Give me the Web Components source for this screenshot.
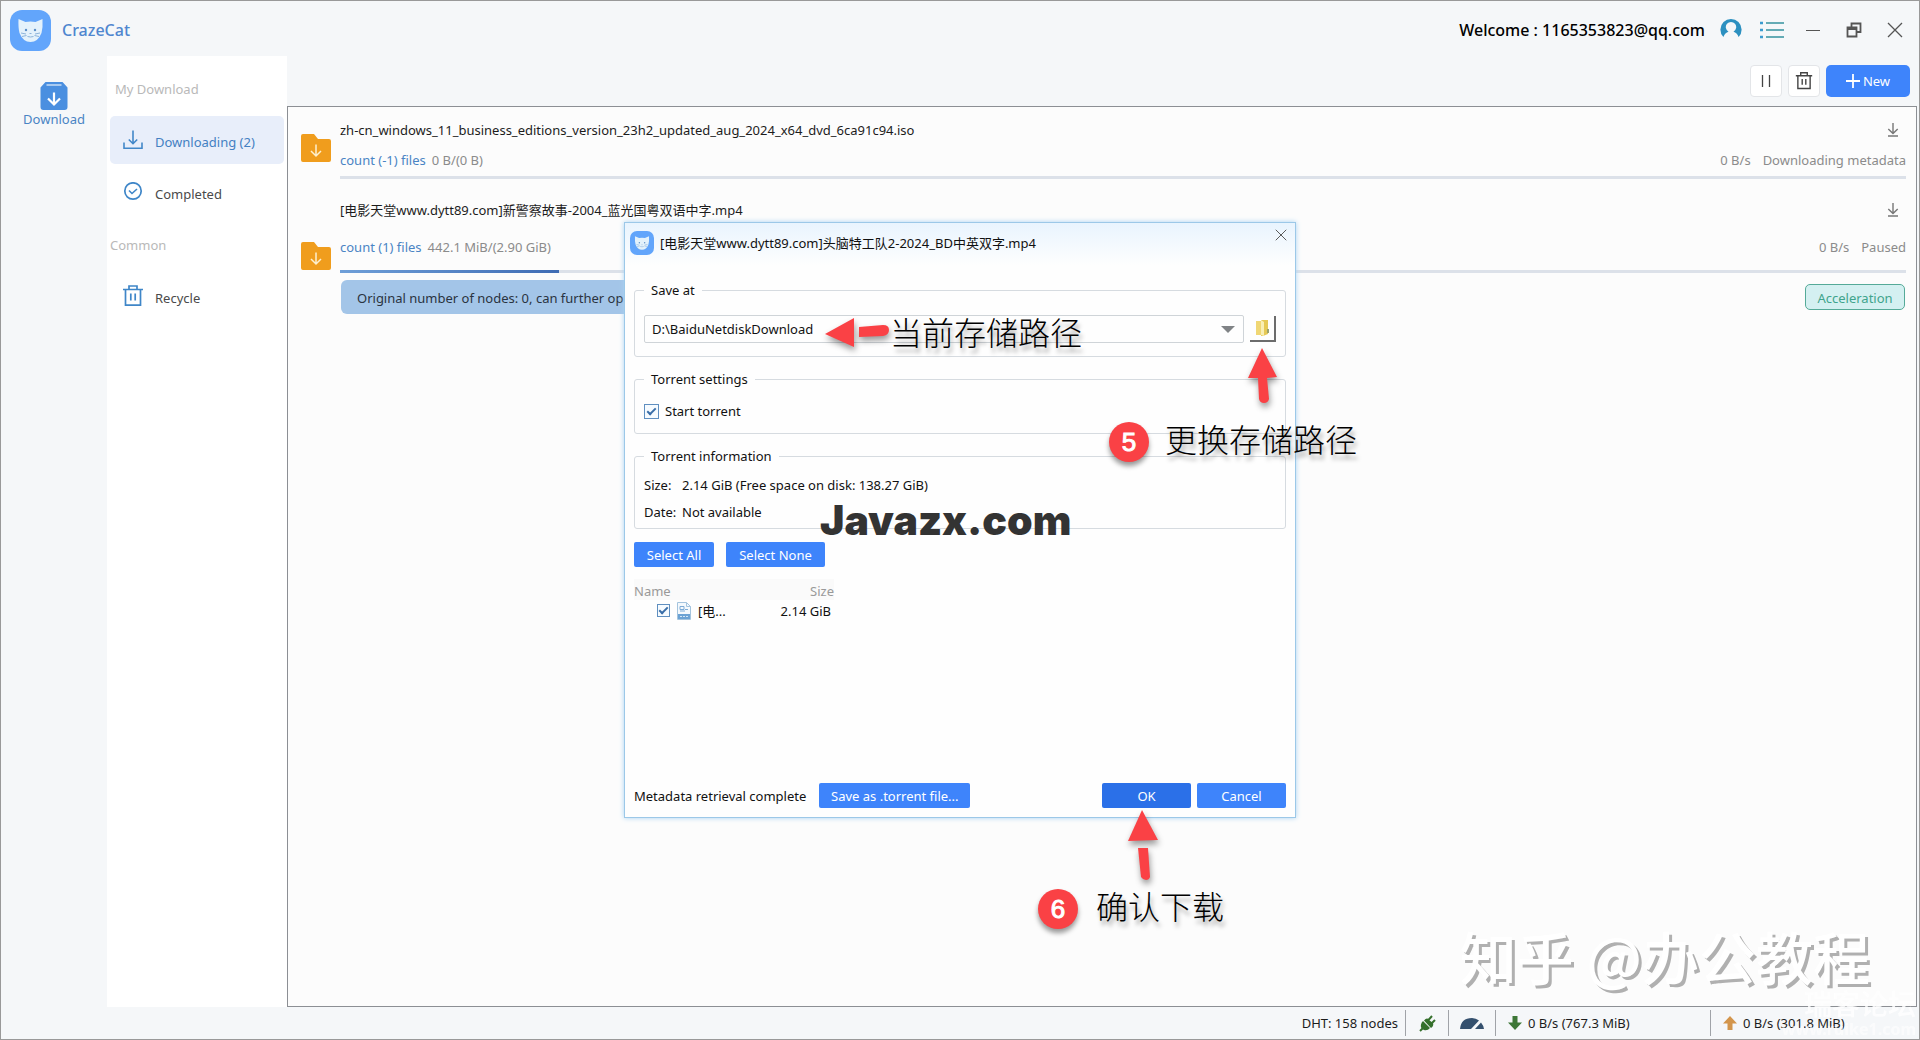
<!DOCTYPE html>
<html lang="en">
<head>
<meta charset="utf-8">
<title>CrazeCat</title>
<style>
  html, body { margin: 0; }
  body { font: 13px/18px "Noto Sans", "Noto Sans CJK SC", sans-serif; color: #1c1c1c; background: #f5f7f9; }
</style>
</head>
<body>
<craze-app></craze-app>

<script>
const base = `<style>
  :host, *, *::before, *::after { box-sizing: border-box; }
  :host { display: block; }
  :host([hidden]) { display: none; }
  svg { display: block; flex: none; }
  button { font: inherit; color: inherit; margin: 0; padding: 0; border: 0; background: none; cursor: pointer; }
</style>`;

function define(name, html) {
  const t = document.createElement('template');
  t.innerHTML = base + html;
  customElements.define(name, class extends HTMLElement {
    constructor() {
      super();
      this.attachShadow({ mode: 'open' }).append(t.content.cloneNode(true));
    }
  });
}

/* ---------- icons ---------- */
const icons = {
  cat: ['0 0 41 41', `<rect width="41" height="41" rx="12" fill="#62a5fb"/><path d="M8.500 9 15.500 12q5-1 10 0l7-3q.5 8-1 14Q28 32 20.500 32T9.500 23Q8.100 17.500 8.500 9z" fill="#e4f2fb"/><circle cx="16" cy="20" r="1.200" fill="#5b8fc7"/><circle cx="25" cy="20" r="1.200" fill="#5b8fc7"/><path d="M19.500 23.500h2M11 23l5 1M12 26.500l4.500-1M30 23l-5 1M29 26.500l-4.500-1M17.500 26.500q3 1 6 0" stroke="#8db4da" fill="none"/>`],
  box: ['0 0 28 28', `<path d="M5.500 0h17L27.500 5.500V25a3 3 0 0 1-3 3h-21a3 3 0 0 1-3-3V5.500z" fill="#4a8fe0"/><path d="M6.500 3h15" stroke="#e8f2fc" stroke-width="1.200"/><path d="M14 10.500v11M8 16.500l6 6 6-6" stroke="#fff" stroke-width="2.200" fill="none"/>`],
  tray: ['0 0 20 20', `<path d="M1 12.500V18.200h18v-5.700M10 .5v13M5.800 9.500l4.200 4.200 4.200-4.200" stroke="#4187c9" stroke-width="1.600" fill="none"/>`],
  done: ['0 0 20 20', `<circle cx="10" cy="9" r="8.200" stroke="#3f86c8" stroke-width="1.700" fill="none"/><path d="M6 8.500 9 11.500l5-4.500" stroke="#3f86c8" stroke-width="1.600" fill="none"/>`],
  bin: ['0 0 20 22', `<path d="M0 4.500h20M2.500 4.500v15.700h15V4.500M6 4V1h8v3M7.800 8.500v7M12.200 8.500v7" stroke="currentColor" stroke-width="1.700" fill="none"/>`],
  folder: ['0 0 30 30', `<path d="M2 1h11l4 5h11a2 2 0 0 1 2 2v19a2 2 0 0 1-2 2H2a2 2 0 0 1-2-2V3a2 2 0 0 1 2-2z" fill="#f09d1d"/><path d="M15 11.500v11M10 18l5 5 5-5" stroke="#fdf0cf" stroke-width="1.500" fill="none"/>`],
  user: ['0 0 22 22', `<path d="M3.400 18A10.600 10.600 0 1 1 18.600 18Q17 13.700 13.500 12.700a5.200 5.200 0 1 0-5 0Q5 13.700 3.400 18z" fill="#2c90c0"/>`],
  list: ['0 0 24 18', `<path d="M6 2h18M6 9h18M6 16h18" stroke="#35939f" stroke-width="1.600"/><path d="M0 2h3M0 9h3M0 16h3" stroke="#3a9bd0" stroke-width="2.400"/>`],
  min: ['0 0 14 16', `<path d="M0 8.500h14" stroke="#555"/>`],
  restore: ['0 0 16 16', `<path d="M5.500 5V1.500h9V10H11" stroke="#555" stroke-width="1.800" fill="none"/><path d="M1.500 5.500h9v9h-9zM1 7h10" stroke="#555" stroke-width="1.800" fill="none"/>`],
  close: ['0 0 16 16', `<path d="M1 1l14 14M15 1 1 15" stroke="#555" stroke-width="1.300"/>`],
  pause: ['0 0 10 12', `<path d="M1.500 0v12M8.500 0v12" stroke="#444" stroke-width="1.300"/>`],
  plus: ['0 0 14 14', `<path d="M7 0v14M0 7h14" stroke="#fff" stroke-width="1.800"/>`],
  down: ['0 0 12 14', `<path d="M6 0v10M1.300 6 6 10.600 10.700 6M1 13h10" stroke="#777" stroke-width="1.400" fill="none"/>`],
  book: ['0 0 16 18', `<path d="M2 2h5v14H2z" fill="#f0d774"/><path d="M7 1h7v14l-5 2H7z" fill="#e6c955"/><path d="M7 1l3 2v14l-3-1z" fill="#f9efb4"/><path d="M13 10h2v4h-2z" fill="#9aa26c"/>`],
  media: ['0 0 14 18', `<path d="M.5.500h9l4 4v13H.5z" fill="#f4f9fd" stroke="#a4c4de"/><path d="M9.500.5v4h4" fill="none" stroke="#a4c4de"/><path d="M3 4.500h4v3H3zM3 9h5M8 7.500h3" stroke="#7dabd6" fill="none"/><path d="M1 12h12v5H1z" fill="#6ba2d4"/><path d="M3 14.500h8" stroke="#d3e6f5" stroke-dasharray="2 1"/>`],
  plug: ['0 0 17 17', `<path d="M1 16l3-3" stroke="#35702c" stroke-width="2"/><path d="M4 6l7 7q-2.500 3-6 2-4-2-3-5.500Q2.500 7 4 6zM5 5.500Q8 2 10 5l4 3q1 3-2 5z" fill="#35702c"/><path d="M9 5.500 13 1M12 9l4-4" stroke="#35702c" stroke-width="2"/>`],
  gauge: ['0 0 24 13', `<path d="M0 12Q1 1 12 1q4 0 7 2.500L11 12zM21 5.500q2.500 3 3 6.500h-9z" fill="#34506e"/>`],
  dn: ['0 0 14 14', `<path d="M4.500 0h5v6.500H14L7 14 0 6.500h4.500z" fill="#3d7737"/>`],
  up: ['0 0 14 14', `<path d="M4.500 14h5V7.500H14L7 0 0 7.500h4.500z" fill="#d3954c"/>`],
};
customElements.define('cc-icon', class extends HTMLElement {
  connectedCallback() {
    if (this.shadowRoot) return;
    const [box, body] = icons[this.getAttribute('name')];
    const [, , w, h] = box.split(' ');
    const size = this.getAttribute('size');
    this.attachShadow({ mode: 'open' }).innerHTML =
      `<style>:host{display:inline-block;flex:none}svg{display:block}</style>
       <svg viewBox="${box}" width="${size || w}" height="${size || h}" aria-hidden="true">${body}</svg>`;
  }
});

/* ---------- header ---------- */
define('title-bar', `<style>
  :host { display: flex; align-items: center; height: 55px; padding: 2px 4px 0 9px; }
  h1 { margin: 0 auto 0 11px; font: 500 16px/24px "Noto Sans", sans-serif; color: #4f86cf; }
  .who { font-size: 16px; line-height: 22px; font-weight: 500; color: #000; margin-right: 5px; }
  button { width: 41px; height: 40px; display: grid; place-items: center; }
  cc-icon[name=cat] { margin-top: 2px; }
</style>
<cc-icon name="cat"></cc-icon><h1>CrazeCat</h1>
<span class="who">Welcome : 1165353823@qq.com</span>
<button aria-label="Account"><cc-icon name="user"></cc-icon></button>
<button aria-label="Menu"><cc-icon name="list"></cc-icon></button>
<button aria-label="Minimize"><cc-icon name="min"></cc-icon></button>
<button aria-label="Restore"><cc-icon name="restore"></cc-icon></button>
<button aria-label="Close"><cc-icon name="close"></cc-icon></button>`);

define('side-rail', `<style>
  :host { width: 106px; flex: none; padding-top: 26px; }
  a { display: flex; flex-direction: column; align-items: center; color: #4a84c4; text-decoration: none; }
</style>
<a href="#download"><cc-icon name="box"></cc-icon>Download</a>`);

define('nav-item', `<style>
  a { display: flex; align-items: center; gap: 12px; height: 48px; padding-left: 13px; border-radius: 5px; color: #4a4a4a; text-decoration: none; }
  :host([active]) a { background: #e8eefa; color: #4480c2; }
  span { padding-top: 4px; }
</style>
<a href="#list"><slot name="icon"></slot><span><slot></slot></span></a>`);

define('side-nav', `<style>
  :host { width: 180px; flex: none; background: #fff; padding: 24px 3px 0; }
  h2 { margin: 0; font: inherit; color: #b9b9b9; }
  .my { padding: 0 5px; margin-bottom: 18px; }
  .common { margin: 20px 0 18px; }
  nav { display: flex; flex-direction: column; gap: 4px; }
  cc-icon { color: #3f86c8; }
</style>
<h2 class="my">My Download</h2>
<nav>
  <nav-item active><cc-icon slot="icon" name="tray"></cc-icon>Downloading (2)</nav-item>
  <nav-item><cc-icon slot="icon" name="done"></cc-icon>Completed</nav-item>
</nav>
<h2 class="common">Common</h2>
<nav><nav-item><cc-icon slot="icon" name="bin"></cc-icon>Recycle</nav-item></nav>`);

/* ---------- content ---------- */
define('tool-bar', `<style>
  :host { display: flex; justify-content: flex-end; align-items: center; gap: 6px; height: 50px; padding-right: 7px; }
  button { height: 32px; width: 32px; display: flex; align-items: center; justify-content: center; background: #fff; border: 1px solid #e3e5e8; border-radius: 4px; color: #444; }
  .new { width: 84px; gap: 3px; background: #3e84fb; border: 0; border-radius: 5px; color: #fff; }
</style>
<button aria-label="Pause"><cc-icon name="pause"></cc-icon></button>
<button aria-label="Delete"><cc-icon name="bin" size="18"></cc-icon></button>
<button class="new"><cc-icon name="plus"></cc-icon>New</button>`);

define('download-row', `<style>
  :host { display: flex; align-items: center; gap: 9px; --gap: 12px; --bar-gap: 7px; --value: 0%; }
  cc-icon[name=folder] { margin-bottom: 4px; }
  .body { flex: 1; min-width: 0; }
  .line { display: flex; align-items: center; justify-content: space-between; }
  .line cc-icon { margin-right: 7px; }
  .meta { margin-top: var(--gap); color: #8b8b8b; }
  .meta ::slotted([slot=count]) { color: #4a84c4; margin-right: 6px; }
  .meta ::slotted([slot=speed]) { margin-right: 12px; }
  .bar { height: 3px; margin-top: var(--bar-gap); background: #dce1e9; }
  .bar i { display: block; height: 3px; width: var(--value); background: linear-gradient(90deg, #6f9fd8, #3f6cb4); }
</style>
<cc-icon name="folder"></cc-icon>
<div class="body">
  <div class="line"><slot name="title"></slot><cc-icon name="down"></cc-icon></div>
  <div class="line meta">
    <div><slot name="count"></slot><slot name="size"></slot></div>
    <div><slot name="speed"></slot><slot name="state"></slot></div>
  </div>
  <div class="bar"><i></i></div>
  <slot name="extra"></slot>
</div>`);

define('download-list', `<style>
  :host { flex: 1; border: 1px solid #8c8f94; background: #fcfcfc; padding: 14px 10px 0 13px; }
  download-row + download-row { margin-top: 22px; --gap: 19px; --bar-gap: 14px; --value: 219px; }
  .extra { display: flex; justify-content: space-between; align-items: center; margin: 7px 1px 0; }
  .note { width: 440px; padding: 9px 16px 7px; background: #a3c5e8; border-radius: 6px; color: #2a3340; }
  .acc { height: 26px; width: 100px; border: 1px solid #55aa98; border-radius: 5px; background: #d4f0f1; color: #3fa48c; padding-top: 2px; }
</style>
<download-row>
  <span slot="title">zh-cn_windows_11_business_editions_version_23h2_updated_aug_2024_x64_dvd_6ca91c94.iso</span>
  <span slot="count">count (-1) files</span><span slot="size">0 B/(0 B)</span>
  <span slot="speed">0 B/s</span><span slot="state">Downloading metadata</span>
</download-row>
<download-row>
  <span slot="title">[电影天堂www.dytt89.com]新警察故事-2004_蓝光国粤双语中字.mp4</span>
  <span slot="count">count (1) files</span><span slot="size">442.1 MiB/(2.90 GiB)</span>
  <span slot="speed">0 B/s</span><span slot="state">Paused</span>
  <div slot="extra" class="extra">
    <div class="note">Original number of nodes: 0, can further op</div>
    <button class="acc">Acceleration</button>
  </div>
</download-row>`);

define('status-bar', `<style>
  :host { display: flex; justify-content: flex-end; align-items: center; height: 32px; color: #1c1c1c; }
  div { display: flex; align-items: center; height: 26px; gap: 6px; }
  div + div { border-left: 1px solid #a0a3a8; }
  .dht { padding-right: 7px; } .plug { width: 43px; justify-content: center; }
  .gauge { width: 47px; justify-content: center; }
  .rate { width: 215px; padding-left: 12px; } .rate:last-child { width: 209px; }
</style>
<div class="dht">DHT: 158 nodes</div>
<div class="plug"><cc-icon name="plug"></cc-icon></div>
<div class="gauge"><cc-icon name="gauge"></cc-icon></div>
<div class="rate"><cc-icon name="dn"></cc-icon>0 B/s (767.3 MiB)</div>
<div class="rate"><cc-icon name="up"></cc-icon>0 B/s (301.8 MiB)</div>`);

/* ---------- dialog ---------- */
define('group-box', `<style>
  fieldset { margin: 0; min-width: 0; border: 1px solid #d6dbe0; border-radius: 3px; padding: var(--pad, 14px) 9px var(--pad-end, 13px); }
  legend { padding: 0 7px; }
</style>
<fieldset><legend><slot name="legend"></slot></legend><slot></slot></fieldset>`);

define('push-button', `<style>
  :host { display: inline-block; }
  button { display: block; width: 100%; height: 25px; padding: 1px 0 0; background: #3e84fb; color: #fff; border-radius: 2px; white-space: nowrap; }
  :host([primary]) button { background: #2b70e8; }
</style><button type="button"><slot></slot></button>`);

define('torrent-dialog', `<style>
  :host { display: flex; flex-direction: column; position: relative; width: 672px; min-height: 596px; background: #fefefe; border: 1px solid #9cc8e8; box-shadow: 0 0 5px #a9d3f3; color: #111; padding: 0 9px 9px; }
  header { display: flex; align-items: center; gap: 6px; height: 42px; margin: 0 -9px 16px; padding: 0 8px 2px 5px; background: linear-gradient(#e9f4fe, #fefefe); }
  header span { flex: 1; }
  header button { align-self: flex-start; padding: 6px 0 0; }
  header button cc-icon { display: block; }
  group-box { margin-bottom: 13px; }
  .path { display: flex; gap: 6px; align-items: center; }
  .combo { flex: 1; position: relative; }
  select { display: block; width: 100%; height: 28px; padding: 0 7px; border: 1px solid #cfd4d8; border-radius: 2px; background: #fefefe; font: inherit; color: #111; appearance: none; }
  .combo::after { content: ""; position: absolute; right: 9px; top: 11px; border: 7px solid transparent; border-top-color: #808386; border-bottom: 0; }
  .browse { width: 26px; height: 26px; display: grid; place-items: center; border-right: 2px solid #6c6c6c; border-bottom: 2px solid #6c6c6c; }
  label { display: flex; align-items: center; gap: 6px; }
  input { appearance: none; margin: 0; width: 15px; height: 15px; border: 1px solid #5f8fc0; background: #f6fbff; flex: none; display: grid; place-items: center; }
  input:checked::before { content: ""; width: 9px; height: 5px; border: solid #3a6ea8; border-width: 0 0 2px 2px; transform: translateY(-1px) rotate(-45deg); }
  td input { width: 13px; height: 13px; }
  dl { display: grid; grid-template-columns: 38px 1fr; row-gap: 9px; margin: 0; }
  dd { margin: 0; }
  .pick { display: flex; gap: 12px; margin-bottom: 12px; }
  .all { width: 80px; } .none { width: 99px; }
  .files { flex: 1; }
  table { width: 200px; border-collapse: collapse; table-layout: fixed; }
  th { font-weight: 400; text-align: left; color: #999; background: #fafafa; height: 21px; padding: 2px 0 0; }
  td { height: 21px; padding: 0; }
  th:last-child { text-align: right; } td:last-child { text-align: right; padding-right: 3px; }
  .name { display: flex; align-items: center; gap: 7px; padding-left: 23px; }
  footer { display: flex; align-items: center; gap: 6px; }
  .save { width: 151px; margin: 0 auto 0 7px; }
  .end { width: 89px; }
</style>
<header><cc-icon name="cat" size="24"></cc-icon><span>[电影天堂www.dytt89.com]头脑特工队2-2024_BD中英双字.mp4</span>
  <button aria-label="Close dialog"><cc-icon name="close" size="12"></cc-icon></button></header>
<group-box style="--pad:16px"><span slot="legend">Save at</span>
  <div class="path"><div class="combo"><select aria-label="Save at"><option>D:\\BaiduNetdiskDownload</option></select></div>
  <button class="browse" aria-label="Browse"><cc-icon name="book"></cc-icon></button></div></group-box>
<group-box><span slot="legend">Torrent settings</span>
  <label><input type="checkbox" checked>Start torrent</label></group-box>
<group-box style="--pad:11px;--pad-end:7px"><span slot="legend">Torrent information</span>
  <dl><dt>Size:</dt><dd>2.14 GiB (Free space on disk: 138.27 GiB)</dd><dt>Date:</dt><dd>Not available</dd></dl></group-box>
<div class="pick"><push-button class="all">Select All</push-button><push-button class="none">Select None</push-button></div>
<div class="files"><table><thead><tr><th>Name</th><th>Size</th></tr></thead>
  <tbody><tr><td><div class="name"><input type="checkbox" checked aria-label="[电..."><cc-icon name="media"></cc-icon><span>[电...</span></div></td><td>2.14 GiB</td></tr></tbody></table></div>
<footer><span>Metadata retrieval complete</span><push-button class="save">Save as .torrent file...</push-button>
  <push-button class="end" primary>OK</push-button><push-button class="end">Cancel</push-button></footer>`);

/* ---------- annotations drawn over the dialog ---------- */
define('guide-notes', `<style>
  :host { position: absolute; inset: 0; pointer-events: none; color: #000; }
  svg { position: absolute; inset: 0; overflow: visible; filter: drop-shadow(1px 4px 3px rgba(0,0,0,.4)); }
  span { position: absolute; white-space: nowrap; font: 300 32px/40px "Noto Sans CJK SC", sans-serif; text-shadow: 2px 5px 4px rgba(0,0,0,.35); }
  b { position: absolute; width: 40px; height: 40px; border-radius: 50%; background: #fa4145; color: #fff; font: 26px/40px "Liberation Sans", sans-serif; text-align: center; box-shadow: 0 4px 5px rgba(0,0,0,.4); -webkit-text-stroke: 1px #fff; }
  .mark { left: 196px; top: 273px; font: 900 41px/50px Inter, sans-serif; color: #333; text-shadow: none; }
</style>
<svg width="672" height="596" fill="#fa4145">
  <path d="M201 112 230 96v29z"/><path d="M235 105l24-2q6 0 6 5t-6 6l-24 1z"/>
  <path d="M638 126l15 29-10 1 2 21q-1 4-5 4t-5-4l-1-21-10 0z"/>
  <path d="M518 588l16 30-30 1z"/><path d="M514 626h10l2 29q-1 3-4 3t-5-3z"/>
</svg>
<span style="left:266px;top:89px">当前存储路径</span>
<b style="left:485px;top:200px">5</b><span style="left:541px;top:196px">更换存储路径</span>
<b style="left:414px;top:667px">6</b><span style="left:472px;top:663px">确认下载</span>
<span class="mark">Javazx.com</span>`);

define('water-mark', `<style>
  :host { position: absolute; inset: auto 3px 0 auto; pointer-events: none; text-align: right; color: #fff; white-space: nowrap; }
  .big { font: 500 57px/64px "Noto Sans CJK SC", sans-serif; text-shadow: 3px 3px 0 #b0b0b0; padding-right: 46px; }
  .small { font: 500 28px/32px "Noto Sans CJK SC", sans-serif; opacity: .85; }
  .url { font: 700 16px/20px "Noto Sans", sans-serif; opacity: .6; }
</style>
<div class="big">知乎 @办公教程</div><div class="small">瑞客论坛</div><div class="url">www.ruike1.com</div>`);

define('craze-app', `<style>
  :host { display: flex; flex-direction: column; position: relative; min-height: 100vh; border: 1px solid #999; overflow: hidden; }
  .cols { flex: 1; display: flex; }
  main { flex: 1; min-width: 0; display: flex; flex-direction: column; padding-right: 2px; }
  .overlay { position: absolute; inset: 0; display: grid; place-items: center; pointer-events: none; }
  .stack { position: relative; pointer-events: auto; }
</style>
<title-bar></title-bar>
<div class="cols"><side-rail></side-rail><side-nav></side-nav>
  <main><tool-bar></tool-bar><download-list></download-list></main></div>
<status-bar></status-bar>
<water-mark></water-mark>
<div class="overlay"><div class="stack"><torrent-dialog></torrent-dialog><guide-notes></guide-notes></div></div>`);
</script>
</body>
</html>
